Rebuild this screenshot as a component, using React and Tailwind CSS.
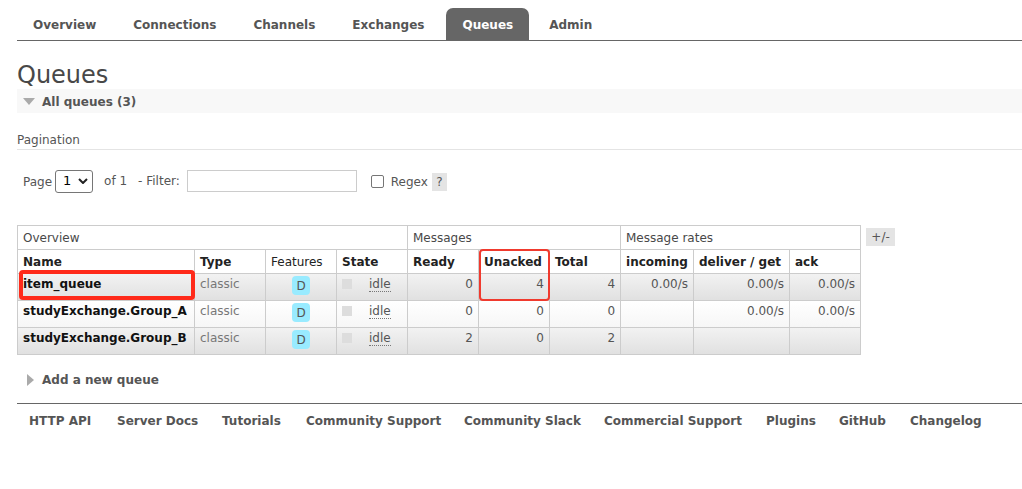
const font = { fontFamily: '"DejaVu Sans", Verdana, sans-serif' };

const tabs = ["Overview", "Connections", "Channels", "Exchanges", "Queues", "Admin"];
const footer = [
  ["HTTP API", 64],
  ["Server Docs", 81],
  ["Tutorials", 60],
  ["Community Support", 134],
  ["Community Slack", 116],
  ["Commercial Support", 138],
  ["Plugins", 49],
  ["GitHub", 47],
  ["Changelog", 72],
];
const widths = [177, 71, 71, 71, 71, 71, 71, 73, 96, 71];

const rows = [
  { name: "item_queue", ready: "0", unacked: "4", total: "4", inc: "0.00/s", del: "0.00/s", ack: "0.00/s", odd: true },
  { name: "studyExchange.Group_A", ready: "0", unacked: "0", total: "0", inc: "", del: "0.00/s", ack: "0.00/s", odd: false },
  { name: "studyExchange.Group_B", ready: "2", unacked: "0", total: "2", inc: "", del: "", ack: "", odd: true },
];

function Num({ children }) {
  return <td className="border border-[#ccc] px-[5px] pt-[1px] pb-[7px] text-right align-top text-[#555]">{children}</td>;
}

export default function App() {
  return (
    <div className="relative w-[1022px] h-[489px] overflow-hidden bg-white text-[12px] text-[#484848]" style={font}>
      <div className="ml-[17px] mt-[8px] h-[33px] flex items-stretch border-b border-[#666] font-bold">
        {tabs.map((t) => (
          <div
            key={t}
            className={
              t === "Queues"
                ? "px-[16px] ml-[1px] mr-[4px] pt-[1px] rounded-t-[7px] bg-[#666] text-white flex items-center"
                : "px-[16px] mr-[5px] pt-[1px] flex items-center text-[#555]"
            }
          >
            {t}
          </div>
        ))}
      </div>

      <div className="ml-[17px] mt-[20px] h-[28px] text-[24px] leading-[29px] text-[#484848]">Queues</div>

      <div className="ml-[17px] h-[24px] pt-[1px] bg-[#f8f8f8] flex items-center font-bold text-[#555]">
        <svg width="12" height="7" viewBox="0 0 12 7" className="ml-[6px] mr-[7px]"><path d="M0 0H12L6 7Z" fill="#aaa" /></svg>
        All queues (3)
      </div>

      <div className="ml-[17px] mt-[18px] h-[19px] border-b border-[#e4e4e4] text-[#555]">Pagination</div>

      <div className="ml-[17px] mt-[19px] h-[24px] pl-[6px] flex items-center text-[#555]">
        <span className="mt-[2px]">Page</span>
        <div className="ml-[3px] w-[38px] h-[23px] border border-[#767676] rounded-[3px] flex items-center justify-between pl-[7px] pr-[4px] text-black text-[13px]">
          1
          <svg width="10" height="6" viewBox="0 0 10 6"><path d="M1 1L5 5L9 1" fill="none" stroke="#222" strokeWidth="2" /></svg>
        </div>
        <span className="ml-[11px]">of 1</span>
        <span className="ml-[11px]">- Filter:</span>
        <div className="ml-[7px] w-[170px] h-[22px] border border-[#ccc]"></div>
        <div className="ml-[14px] w-[13px] h-[13px] border border-[#767676] rounded-[2px]"></div>
        <span className="ml-[7px] mt-[2px]">Regex</span>
        <span className="ml-[4px] w-[15px] h-[18px] mt-[2px] bg-[#e4e4e4] flex items-center justify-center">?</span>
      </div>

      <div className="ml-[17px] mt-[32px] flex items-start">
        <table className="border-collapse table-fixed w-[844px] text-[#484848]">
          <colgroup>
            {widths.map((w, i) => (
              <col key={i} style={{ width: w }} />
            ))}
          </colgroup>
          <thead>
            <tr className="h-[24px]">
              <th colSpan={4} className="border border-[#ccc] px-[5px] text-left font-normal">Overview</th>
              <th colSpan={3} className="border border-[#ccc] px-[5px] text-left font-normal">Messages</th>
              <th colSpan={3} className="border border-[#ccc] px-[5px] text-left font-normal">Message rates</th>
            </tr>
            <tr className="h-[24px] text-[#222]">
              <th className="border border-[#ccc] px-[5px] text-left font-bold">Name</th>
              <th className="border border-[#ccc] px-[5px] text-left font-bold">Type</th>
              <th className="border border-[#ccc] px-[5px] text-left font-normal">Features</th>
              <th className="border border-[#ccc] px-[5px] text-left font-bold">State</th>
              <th className="border border-[#ccc] px-[5px] text-left font-bold">Ready</th>
              <th className="border border-[#ccc] px-[5px] text-left font-bold">Unacked</th>
              <th className="border border-[#ccc] px-[5px] text-left font-bold">Total</th>
              <th className="border border-[#ccc] px-[5px] text-left font-bold">incoming</th>
              <th className="border border-[#ccc] px-[5px] text-left font-bold whitespace-nowrap">deliver / get</th>
              <th className="border border-[#ccc] px-[5px] text-left font-bold">ack</th>
            </tr>
          </thead>
          <tbody>
            {rows.map((r) => (
              <tr
                key={r.name}
                className={
                  r.odd
                    ? "h-[27px] bg-gradient-to-b from-[#f2f2f2] to-[#e0e0e0]"
                    : "h-[27px] bg-gradient-to-b from-white to-[#f6f6f6]"
                }
              >
                <td className="border border-[#ccc] pl-[5px] pt-[1px] pb-[7px] align-top font-bold text-[#111] whitespace-nowrap overflow-hidden">{r.name}</td>
                <td className="border border-[#ccc] px-[5px] pt-[1px] pb-[7px] align-top text-[#777]">classic</td>
                <td className="border border-[#ccc] pt-[2px] align-top">
                  <div className="mx-auto w-[18px] h-[19px] rounded-[4px] bg-[#99ebff] text-[#555] flex items-center justify-center">D</div>
                </td>
                <td className="border border-[#ccc] pl-[5px] pt-[1px] pb-[7px] align-top">
                  <div className="flex items-start">
                    <span className="w-[10px] h-[10px] mt-[4px] bg-[#ddd]"></span>
                    <span className="ml-[17px] mt-[2px] text-[#555] border-b border-dotted border-[#777] leading-[14px]">idle</span>
                  </div>
                </td>
                <Num>{r.ready}</Num>
                <Num>{r.unacked}</Num>
                <Num>{r.total}</Num>
                <Num>{r.inc}</Num>
                <Num>{r.del}</Num>
                <Num>{r.ack}</Num>
              </tr>
            ))}
          </tbody>
        </table>
        <div className="ml-[5px] mt-[3px] w-[29px] h-[18px] bg-[#e4e4e4] text-[#555] flex items-center justify-center">+/-</div>
      </div>

      <div className="ml-[17px] mt-[15px] h-[20px] flex items-center font-bold text-[#555]">
        <svg width="7" height="12" viewBox="0 0 7 12" className="ml-[10px] mr-[8px]"><path d="M0 0V12L7 6Z" fill="#aaa" /></svg>
        Add a new queue
      </div>

      <div className="ml-[17px] mt-[13px] border-t border-[#666] pt-[8px] pl-[12px] flex gap-[24px] font-bold text-[#555] whitespace-nowrap">
        {footer.map(([f, w]) => (
          <span key={f} style={{ width: w }}>{f}</span>
        ))}
      </div>

      <div className="absolute left-[19px] top-[270px] w-[176px] h-[30px] border-[4px] border-[#ff2a1a] rounded-[4px] pointer-events-none"></div>
      <div className="absolute left-[479px] top-[249px] w-[71px] h-[52px] border-2 border-[#f03a2e] rounded-[4px] pointer-events-none"></div>
    </div>
  );
}
